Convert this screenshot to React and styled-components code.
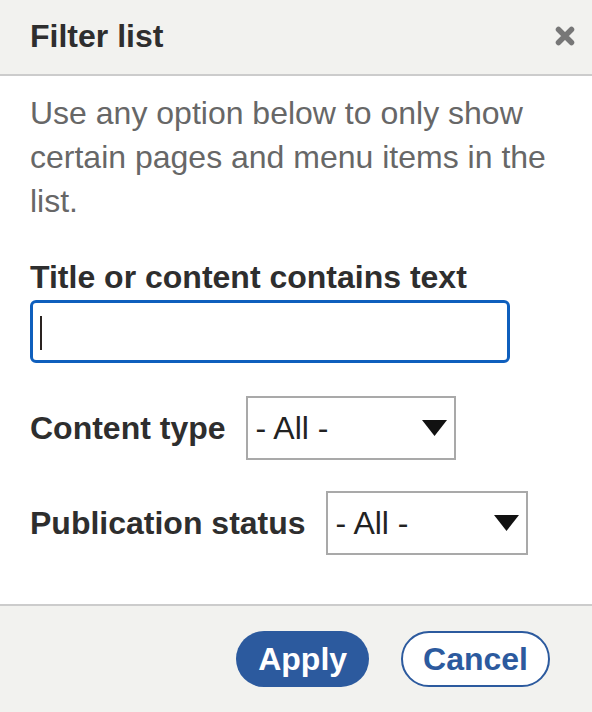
import React from "react";
import styled, { createGlobalStyle } from "styled-components";

const GlobalStyle = createGlobalStyle`
  html, body {
    margin: 0;
    padding: 0;
    background: #ffffff;
  }
  body {
    font-family: "Liberation Sans", Arial, Helvetica, sans-serif;
  }
  * {
    box-sizing: border-box;
  }
`;

const Dialog = styled.div`
  width: 592px;
  height: 712px;
  display: flex;
  flex-direction: column;
  background: #ffffff;
  color: #333333;
`;

const Header = styled.div`
  height: 76px;
  padding: 0 16px 2px 30px;
  display: flex;
  align-items: center;
  justify-content: space-between;
  background: #f2f2ef;
  border-bottom: 2px solid #cccccc;
`;

const Title = styled.h2`
  margin: 0;
  font-size: 32px;
  font-weight: bold;
  color: #2e2e2e;
`;

const CloseButton = styled.button`
  width: 22px;
  height: 22px;
  padding: 0;
  border: 0;
  background: none;
  display: flex;
  align-items: center;
  justify-content: center;
  cursor: pointer;
`;

const Body = styled.div`
  flex: 1;
  padding: 15px 30px 0 30px;
`;

const Intro = styled.p`
  margin: 0;
  font-size: 32px;
  line-height: 44px;
  color: #676767;
`;

const FieldLabel = styled.label`
  display: block;
  margin-top: 32px;
  font-size: 32px;
  line-height: 44px;
  font-weight: bold;
  color: #2e2e2e;
`;

const InputWrap = styled.div`
  position: relative;
  width: 480px;
  margin-top: 1px;
`;

const TextInput = styled.input`
  display: block;
  width: 100%;
  height: 63px;
  border: 3px solid #0f5fbd;
  border-radius: 6px;
  padding: 0 10px;
  font-family: inherit;
  font-size: 32px;
  outline: none;
  background: #ffffff;
`;

// static text caret, as in the focused field of the screenshot
const Caret = styled.span`
  position: absolute;
  left: 10px;
  top: 16px;
  width: 2px;
  height: 34px;
  background: #2a2320;
`;

const SelectRow = styled.div`
  display: flex;
  align-items: center;
  gap: 20px;
  margin-top: ${(p) => p.$top}px;
`;

const RowLabel = styled.span`
  font-size: 32px;
  font-weight: bold;
  color: #2e2e2e;
`;

const SelectBox = styled.div`
  width: ${(p) => p.$width}px;
  height: 64px;
  display: flex;
  align-items: center;
  justify-content: space-between;
  padding: 0 7px 0 8px;
  border: 2px solid #a9a9a9;
  background: #ffffff;
  font-size: 32px;
  color: #222222;
  cursor: pointer;
`;

const Footer = styled.div`
  height: 108px;
  padding: 0 42px 0 30px;
  display: flex;
  align-items: center;
  justify-content: flex-end;
  gap: 32px;
  background: #f2f2ef;
  border-top: 2px solid #cccccc;
`;

const Button = styled.button`
  height: 56px;
  padding: 0 ${(p) => (p.$primary ? 22 : 20)}px;
  border-radius: 28px;
  border: ${(p) => (p.$primary ? "0" : "2px solid #2c5a9e")};
  background: ${(p) => (p.$primary ? "#2c5a9e" : "#ffffff")};
  color: ${(p) => (p.$primary ? "#ffffff" : "#2c5a9e")};
  font-family: inherit;
  font-size: 32px;
  font-weight: bold;
  cursor: pointer;
`;

const CloseIcon = () => (
  <svg width="22" height="22" viewBox="0 0 22 22">
    <path
      d="M4.5 4.5 L17.5 17.5 M17.5 4.5 L4.5 17.5"
      stroke="#777777"
      strokeWidth="5.5"
      strokeLinecap="round"
      fill="none"
    />
  </svg>
);

const ArrowDown = () => (
  <svg width="25" height="16" viewBox="0 0 25 16">
    <polygon points="0,0 25,0 12.5,16" fill="#111111" />
  </svg>
);

const Select = ({ width }) => (
  <SelectBox $width={width}>
    <span>- All -</span>
    <ArrowDown />
  </SelectBox>
);

export default function App() {
  return (
    <>
      <GlobalStyle />
      <Dialog>
        <Header>
          <Title>Filter list</Title>
          <CloseButton aria-label="Close">
            <CloseIcon />
          </CloseButton>
        </Header>
        <Body>
          <Intro>
            Use any option below to only show certain pages and menu items in
            the list.
          </Intro>
          <FieldLabel htmlFor="filter-text">
            Title or content contains text
          </FieldLabel>
          <InputWrap>
            <TextInput id="filter-text" type="text" />
            <Caret />
          </InputWrap>
          <SelectRow $top={33}>
            <RowLabel>Content type</RowLabel>
            <Select width={210} />
          </SelectRow>
          <SelectRow $top={31}>
            <RowLabel>Publication status</RowLabel>
            <Select width={202} />
          </SelectRow>
        </Body>
        <Footer>
          <Button $primary>Apply</Button>
          <Button>Cancel</Button>
        </Footer>
      </Dialog>
    </>
  );
}
